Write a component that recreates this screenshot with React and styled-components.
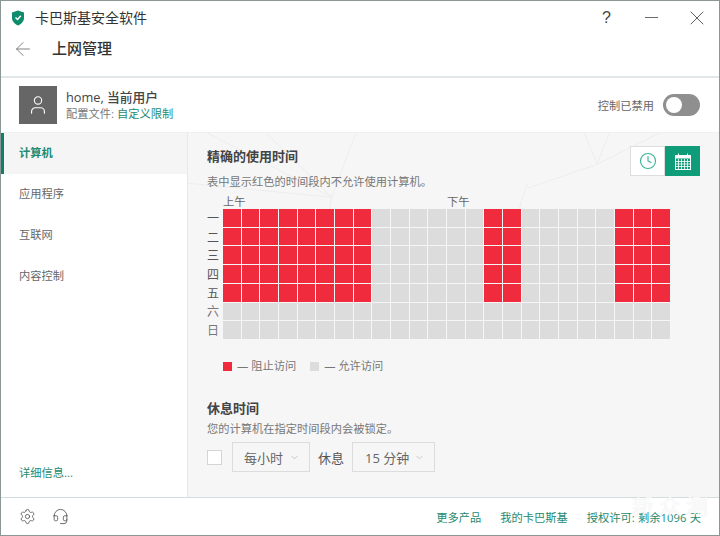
import React from 'react';
import styled, { createGlobalStyle } from 'styled-components';
import { ArrowLeft, User, Clock, ChevronDown, Settings, Headset, X, Minus } from 'lucide-react';

const GlobalStyle = createGlobalStyle`
    html, body { margin: 0; padding: 0; background: #fff; }
    * { box-sizing: border-box; }
`;

const FONT = '"Open Sans", "Noto Sans CJK SC", sans-serif';

const Window = styled.div`
    position: relative;
    width: 720px;
    height: 536px;
    display: flex;
    flex-direction: column;
    overflow: hidden;
    background: #fff;
    border: 1px solid #8b9696;
    font-family: ${FONT};
    color: #444;
`;

const TitleBar = styled.div`
    height: 33px;
    display: flex;
    align-items: center;
    padding-left: 10px;
    flex-shrink: 0;
`;

const AppName = styled.div`
    margin: -2px 0 0 10px;
    font-size: 14px;
    color: #333;
`;

const WinButtons = styled.div`
    margin-left: auto;
    display: flex;
    align-items: center;
    color: #444;
`;

const WinButton = styled.div`
    width: 45px;
    height: 24px;
    display: flex;
    align-items: center;
    justify-content: center;
    font-size: 16px;
    font-family: "Liberation Sans", sans-serif;
`;

const PageHeader = styled.div`
    height: 44px;
    display: flex;
    align-items: flex-start;
    padding: 4px 0 0 11px;
    border-bottom: 2px solid #e2e7ea;
    flex-shrink: 0;
`;

const PageTitle = styled.h1`
    margin: -3px 0 0 18px;
    font-size: 15px;
    font-weight: 500;
    color: #333;
    line-height: 26px;
`;

const UserRow = styled.div`
    height: 54px;
    display: flex;
    align-items: center;
    padding: 0 19px 0 18px;
    flex-shrink: 0;
`;

const Avatar = styled.div`
    width: 38px;
    height: 38px;
    background: #666;
    display: flex;
    align-items: center;
    justify-content: center;
    color: #fff;
`;

const UserInfo = styled.div`
    margin: -1px 0 0 9px;
    display: flex;
    flex-direction: column;
`;

const UserName = styled.div`
    font-size: 12.75px;
    line-height: 17px;
    font-weight: 500;
    color: #444;
`;

const ProfileLine = styled.div`
    font-size: 11.25px;
    line-height: 15px;
    color: #777;
`;

const GreenText = styled.span`
    color: #1f8a70;
`;

const ToggleArea = styled.div`
    margin-left: auto;
    display: flex;
    align-items: center;
    gap: 9px;
    font-size: 11.25px;
    color: #666;
`;

const Toggle = styled.div`
    width: 37px;
    height: 22px;
    border-radius: 11px;
    background: #8f8f8f;
    padding: 3px 0 0 3px;
`;

const Knob = styled.div`
    width: 16px;
    height: 16px;
    border-radius: 50%;
    background: #fff;
`;

const Body = styled.div`
    flex: 1;
    display: flex;
    min-height: 0;
    border-top: 1px solid #eef0f1;
`;

const Sidebar = styled.nav`
    width: 187px;
    display: flex;
    flex-direction: column;
    border-right: 1px solid #e6e8e9;
    flex-shrink: 0;
`;

const NavItem = styled.div`
    height: 41px;
    display: flex;
    align-items: center;
    padding-bottom: 3px;
    padding-left: ${({ $active }) => ($active ? '15px' : '18px')};
    font-size: 11.25px;
    color: ${({ $active }) => ($active ? '#1f8a70' : '#666')};
    font-weight: ${({ $active }) => ($active ? 700 : 400)};
    background: ${({ $active }) => ($active ? '#f5f5f5' : '#fff')};
    border-left: ${({ $active }) => ($active ? '3px solid #0f7f68' : 'none')};
`;

const MoreLink = styled.div`
    margin-top: auto;
    padding: 0 0 17px 18px;
    font-size: 11.25px;
    color: #1f8a70;
`;

const Content = styled.main`
    position: relative;
    flex: 1;
    background: #f6f6f6;
    padding: 15px 19px 0 19px;
    overflow: hidden;
`;

const Backdrop = styled.svg`
    position: absolute;
    inset: 0;
    width: 100%;
    height: 100%;
`;

const Section = styled.div`
    position: relative;
`;

const SectionTitle = styled.h2`
    margin: 0;
    font-size: 13px;
    line-height: 17px;
    font-weight: 700;
    color: #444;
`;

const Hint = styled.p`
    margin: 9px 0 0;
    font-size: 11.25px;
    line-height: 15px;
    color: #777;
`;

const ViewSwitch = styled.div`
    position: absolute;
    right: 0;
    top: -2px;
    display: flex;
    height: 30px;
`;

const ViewButton = styled.div`
    width: 35px;
    height: 30px;
    display: flex;
    align-items: center;
    justify-content: center;
    background: ${({ $active }) => ($active ? '#0e9d78' : '#fff')};
    color: ${({ $active }) => ($active ? '#fff' : '#3cb495')};
    border: ${({ $active }) => ($active ? 'none' : '1px solid #ddd')};
`;

const Periods = styled.div`
    display: flex;
    margin: 5px 0 0 16px;
    font-size: 11.25px;
    line-height: 15px;
    color: #666;
`;

const Period = styled.span`
    width: 224px;
`;

const Schedule = styled.div`
    display: flex;
`;

const DayLabels = styled.div`
    width: 16px;
    display: grid;
    grid-template-rows: repeat(7, 18.6px);
    font-size: 12px;
    color: #666;
`;

const DayLabel = styled.div`
    display: flex;
    align-items: center;
    color: ${({ $off }) => ($off ? '#777' : '#555')};
`;

const Grid = styled.div`
    width: 447px;
    height: 130px;
    display: grid;
    grid-template-columns: repeat(24, 1fr);
    grid-template-rows: repeat(7, 1fr);
    gap: 1px;
`;

const Cell = styled.div`
    background: ${({ $blocked }) => ($blocked ? '#f12b3e' : '#dcdcdc')};
`;

const Legend = styled.div`
    display: flex;
    align-items: center;
    margin: 20px 0 0 16px;
    font-size: 11.25px;
    line-height: 14px;
    color: #777;
`;

const Swatch = styled.span`
    width: 9px;
    height: 9px;
    margin-right: 5px;
    background: ${({ $color }) => $color};
`;

const LegendText = styled.span`
    margin-right: 14px;
`;

const BreakSection = styled(Section)`
    margin-top: 27px;
`;

const BreakHint = styled(Hint)`
    margin-top: 4px;
`;

const BreakRow = styled.div`
    display: flex;
    align-items: center;
    margin-top: 6px;
    font-size: 13px;
    color: #555;
`;

const Check = styled.div`
    width: 15px;
    height: 15px;
    background: #fff;
    border: 1px solid #d5d5d5;
    margin-right: 10px;
`;

const Select = styled.div`
    height: 30px;
    width: ${({ $width }) => $width}px;
    display: flex;
    align-items: center;
    justify-content: space-between;
    padding: 0 9px 0 ${({ $pad }) => $pad}px;
    border: 1px solid #dcdcdc;
    color: #666;
`;

const Caret = styled(ChevronDown)`
    color: #c4c4c4;
`;

const BreakLabel = styled.span`
    margin: 0 8px;
`;

const Footer = styled.footer`
    height: 38px;
    display: flex;
    align-items: center;
    padding: 0 18px;
    border-top: 1px solid #d5dcdf;
    flex-shrink: 0;
    color: #555;
`;

const FooterIcons = styled.div`
    display: flex;
    align-items: center;
    gap: 16px;
`;

const FooterLinks = styled.div`
    margin-left: auto;
    display: flex;
    gap: 19px;
    font-size: 11.25px;
    color: #1f8a70;
    word-spacing: 0.5px;
`;

const Watermark = styled.div`
    position: absolute;
    right: 6px;
    top: 490px;
    font-size: 22px;
    line-height: 28px;
    letter-spacing: 5px;
    color: rgba(255, 255, 255, 0.85);
    text-shadow: 0 0 1px rgba(190, 190, 190, 0.4);
    pointer-events: none;
`;

const BLOCKED_COLS = [0, 1, 2, 3, 4, 5, 6, 7, 14, 15, 21, 22, 23];
const DAYS = ['一', '二', '三', '四', '五', '六', '日'];

const CalendarGrid = () => (
    <svg width="16" height="17" viewBox="0 0 16 17">
        <rect x="0.5" y="2.5" width="15" height="14" fill="none" stroke="#fff" />
        <rect x="0.5" y="2.5" width="15" height="3" fill="#fff" />
        <path d="M3.5 0.5V3M12.5 0.5V3" stroke="#fff" />
        <path d="M3.5 6V16M6.5 6V16M9.5 6V16M12.5 6V16M1 8.5H15M1 11H15M1 13.5H15" stroke="#fff" strokeWidth="0.8" />
    </svg>
);

const App = () => {
    const cells = [];
    DAYS.forEach((day, row) => {
        for (let col = 0; col < 24; col++) {
            cells.push(<Cell key={`${row}-${col}`} $blocked={row < 5 && BLOCKED_COLS.includes(col)} />);
        }
    });

    return (
        <Window>
            <GlobalStyle />
            <TitleBar>
                <svg width="14" height="16" viewBox="0 0 14 16">
                    <path d="M7 0.5 L13 2.5 V8 C13 11.5 10 14 7 15.5 C4 14 1 11.5 1 8 V2.5 Z" fill="#0e8a6c" />
                    <path d="M4.5 7.5 L6.5 9.5 L9.8 5.8" fill="none" stroke="#fff" strokeWidth="1.5" />
                </svg>
                <AppName>卡巴斯基安全软件</AppName>
                <WinButtons>
                    <WinButton>?</WinButton>
                    <WinButton><Minus size={21} strokeWidth={0.9} /></WinButton>
                    <WinButton><X size={24} strokeWidth={0.85} /></WinButton>
                </WinButtons>
            </TitleBar>
            <PageHeader>
                <ArrowLeft size={22} strokeWidth={1} color="#777" />
                <PageTitle>上网管理</PageTitle>
            </PageHeader>
            <UserRow>
                <Avatar><User size={22} strokeWidth={1.2} /></Avatar>
                <UserInfo>
                    <UserName>home, 当前用户</UserName>
                    <ProfileLine>配置文件: <GreenText>自定义限制</GreenText></ProfileLine>
                </UserInfo>
                <ToggleArea>
                    控制已禁用
                    <Toggle><Knob /></Toggle>
                </ToggleArea>
            </UserRow>
            <Body>
                <Sidebar>
                    <NavItem $active>计算机</NavItem>
                    <NavItem>应用程序</NavItem>
                    <NavItem>互联网</NavItem>
                    <NavItem>内容控制</NavItem>
                    <MoreLink>详细信息...</MoreLink>
                </Sidebar>
                <Content>
                    <Backdrop viewBox="0 0 532 364">
                        <g stroke="#ededed" strokeWidth="1" fill="none">
                            <path d="M20 0 L144 64 L168 0 M144 64 L79 0 M144 64 L130 140 M144 64 L0 50" />
                            <path d="M397 0 L410 31 L422 0 M410 31 L472 0 M410 31 L340 55 M340 50 L332 75" />
                        </g>
                    </Backdrop>
                    <Section>
                        <SectionTitle>精确的使用时间</SectionTitle>
                        <ViewSwitch>
                            <ViewButton><Clock size={18} strokeWidth={1.5} /></ViewButton>
                            <ViewButton $active><CalendarGrid /></ViewButton>
                        </ViewSwitch>
                        <Hint>表中显示红色的时间段内不允许使用计算机。</Hint>
                        <Periods>
                            <Period>上午</Period>
                            <Period>下午</Period>
                        </Periods>
                        <Schedule>
                            <DayLabels>
                                {DAYS.map((day, i) => <DayLabel key={day} $off={i > 4}>{day}</DayLabel>)}
                            </DayLabels>
                            <Grid>{cells}</Grid>
                        </Schedule>
                        <Legend>
                            <Swatch $color="#f12b3e" />
                            <LegendText>— 阻止访问</LegendText>
                            <Swatch $color="#dcdcdc" />
                            <LegendText>— 允许访问</LegendText>
                        </Legend>
                    </Section>
                    <BreakSection>
                        <SectionTitle>休息时间</SectionTitle>
                        <BreakHint>您的计算机在指定时间段内会被锁定。</BreakHint>
                        <BreakRow>
                            <Check />
                            <Select $width={78} $pad={11}>每小时<Caret size={11} /></Select>
                            <BreakLabel>休息</BreakLabel>
                            <Select $width={83} $pad={12}>15 分钟<Caret size={11} /></Select>
                        </BreakRow>
                    </BreakSection>
                </Content>
            </Body>
            <Footer>
                <FooterIcons>
                    <Settings size={17} strokeWidth={1.2} />
                    <Headset size={17} strokeWidth={1.2} />
                </FooterIcons>
                <FooterLinks>
                    <span>更多产品</span>
                    <span>我的卡巴斯基</span>
                    <span>授权许可: 剩余1096 天</span>
                </FooterLinks>
            </Footer>
            <Watermark>新众测</Watermark>
        </Window>
    );
};

export default App;
